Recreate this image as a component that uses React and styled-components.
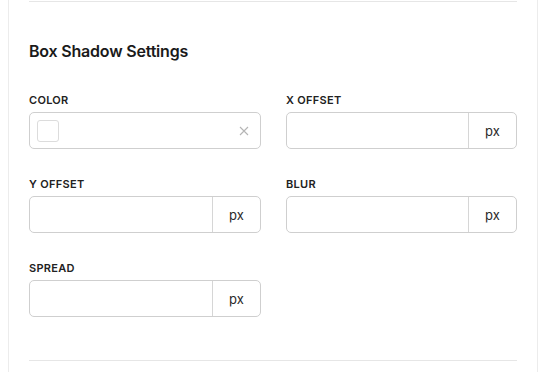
import React from "react";
import styled, { createGlobalStyle } from "styled-components";

const Global = createGlobalStyle`
  html, body {
    margin: 0;
    padding: 0;
    background: #fff;
  }
  body {
    font-family: "Inter", "Liberation Sans", sans-serif;
    color: #1c1c1c;
  }
`;

const Page = styled.div`
  padding-left: 8px;
  width: 553px;
  height: 372px;
  box-sizing: border-box;
  overflow: hidden;
`;

const Card = styled.div`
  width: 530px;
  height: 372px;
  box-sizing: border-box;
  border-left: 1px solid #ececec;
  border-right: 1px solid #ececec;
  padding: 1px 20px 0 20px;
`;

const Divider = styled.div`
  height: 1px;
  background: #e6e6e6;
`;

const Section = styled.div`
  padding: 38px 0 43px;
`;

const Title = styled.h3`
  margin: 0 0 31px;
  font-size: 16px;
  font-weight: 600;
  line-height: 22px;
  letter-spacing: -0.2px;
  color: #1a1a1a;
`;

const Grid = styled.div`
  display: grid;
  grid-template-columns: 232px 231px;
  column-gap: 25px;
  row-gap: 28px;
`;

const Field = styled.div`
  display: flex;
  flex-direction: column;
`;

const Label = styled.label`
  font-size: 11px;
  font-weight: 600;
  line-height: 14px;
  letter-spacing: 0.3px;
  text-transform: uppercase;
  color: #222;
  margin-bottom: 5px;
`;

const InputBox = styled.div`
  display: flex;
  align-items: center;
  height: 37px;
  box-sizing: border-box;
  border: 1px solid #cfcfcf;
  border-radius: 5px;
  background: #fff;
  overflow: hidden;
`;

const Input = styled.input`
  flex: 1;
  min-width: 0;
  height: 100%;
  border: none;
  outline: none;
  padding: 0 10px;
  font: inherit;
  font-size: 13px;
  background: transparent;
`;

const Unit = styled.span`
  width: 48px;
  height: 100%;
  box-sizing: border-box;
  display: flex;
  align-items: center;
  justify-content: center;
  border-left: 1px solid #d6d6d6;
  font-size: 13px;
  color: #2a2a2a;
`;

const Swatch = styled.span`
  width: 22px;
  height: 22px;
  box-sizing: border-box;
  margin-left: 7px;
  border: 1px solid #dcdcdc;
  border-radius: 3px;
  background: #fff;
`;

const Clear = styled.button`
  margin-left: auto;
  margin-right: 11px;
  border: none;
  background: none;
  padding: 0;
  display: flex;
  cursor: pointer;
`;

const UnitField = ({ label }) => (
  <Field>
    <Label>{label}</Label>
    <InputBox>
      <Input type="text" />
      <Unit>px</Unit>
    </InputBox>
  </Field>
);

const App = () => {
  return (
    <>
      <Global />
      <Page>
        <Card>
          <Divider />
          <Section>
            <Title>Box Shadow Settings</Title>
            <Grid>
              <Field>
                <Label>Color</Label>
                <InputBox>
                  <Swatch />
                  <Clear>
                    <svg width="10" height="10" viewBox="0 0 10 10">
                      <path
                        d="M1 1L9 9M9 1L1 9"
                        stroke="#b5b5b5"
                        strokeWidth="1.1"
                        fill="none"
                      />
                    </svg>
                  </Clear>
                </InputBox>
              </Field>
              <UnitField label="X Offset" />
              <UnitField label="Y Offset" />
              <UnitField label="Blur" />
              <UnitField label="Spread" />
            </Grid>
          </Section>
          <Divider />
        </Card>
      </Page>
    </>
  );
};

export default App;
